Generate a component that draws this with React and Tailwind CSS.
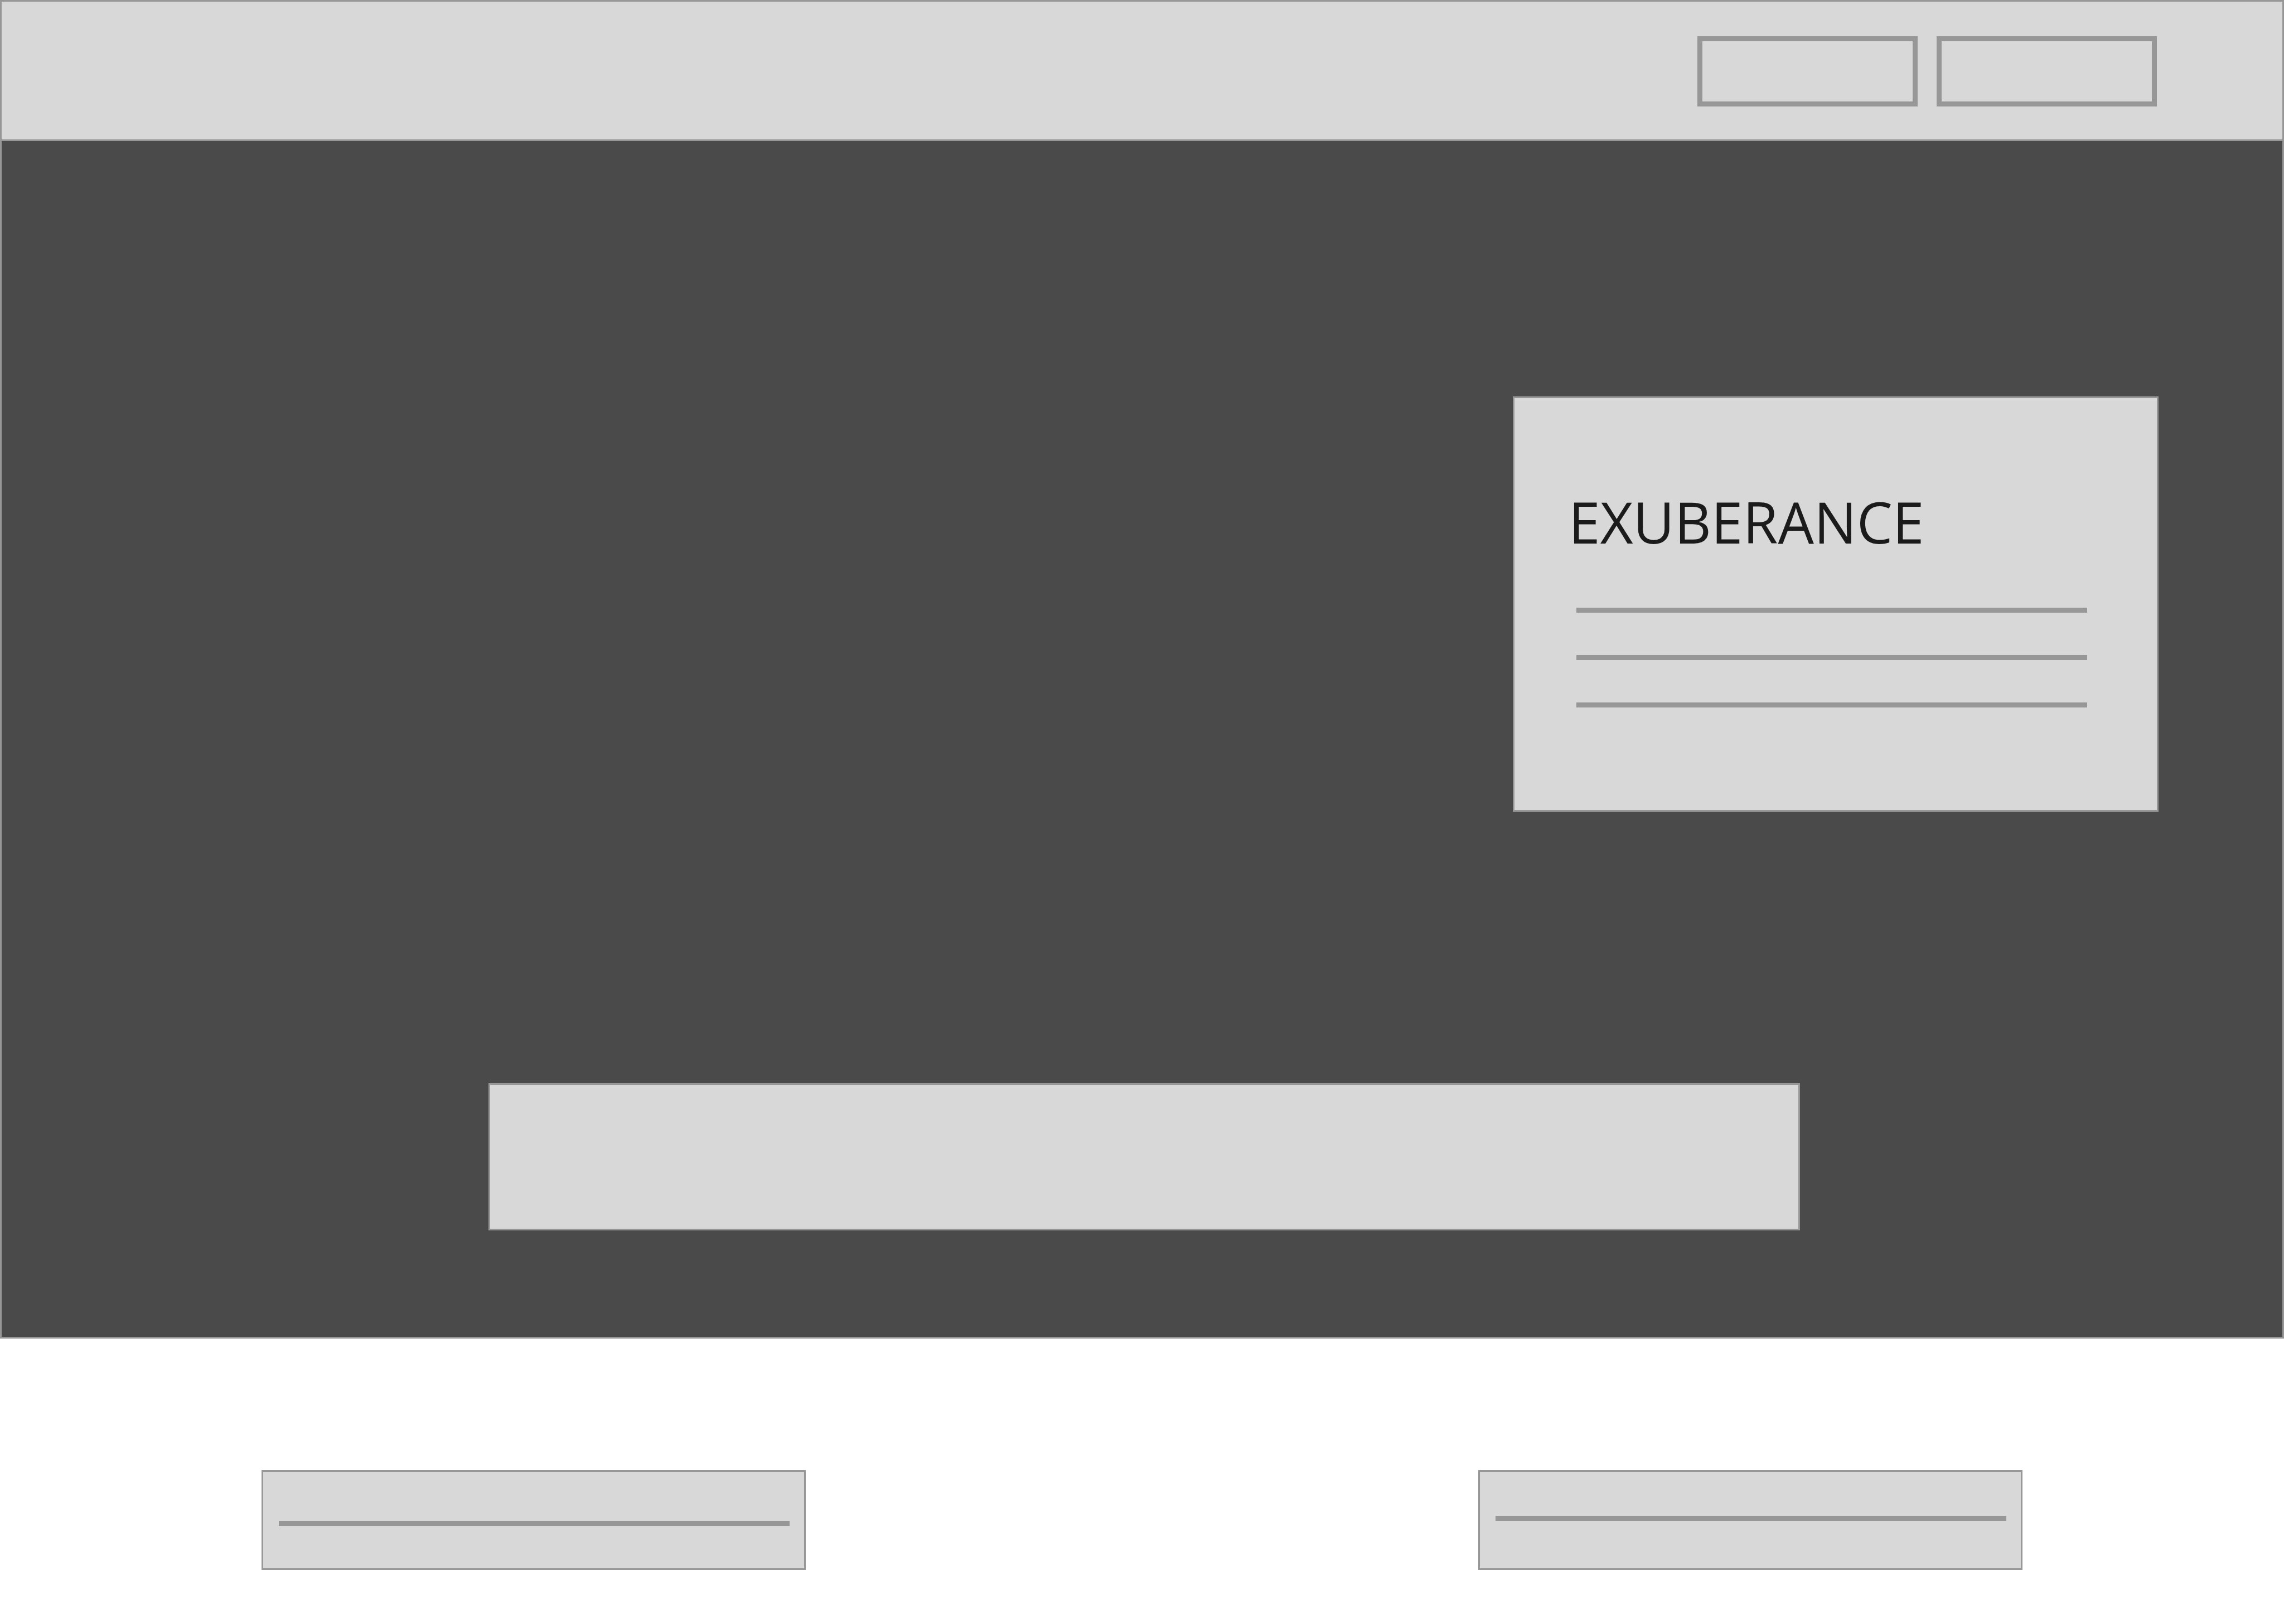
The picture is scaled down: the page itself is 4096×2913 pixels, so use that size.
const lines = ["first", "second", "third"];

function TextLine() {
  return <div className="h-[9px] bg-[#979797]" />;
}

function Header() {
  return (
    <header className="flex justify-end border-3 border-[#979797] bg-[#d8d8d8] pt-[62px] pr-[225px] pb-[59px]">
      <nav aria-label="Account" className="flex gap-[34px]">
        <button type="button" aria-label="Log in" className="h-[126px] w-[395px] border-9 border-[#979797]" />
        <button type="button" aria-label="Sign up" className="h-[126px] w-[395px] border-9 border-[#979797]" />
      </nav>
    </header>
  );
}

function IntroCard() {
  return (
    <article className="w-[1158px] border-3 border-[#979797] bg-[#d8d8d8] pt-[171px] pr-[125px] pb-[184px] pl-[97px]">
      <h1 className="font-['Open_Sans',sans-serif] text-[102px] leading-[102px] text-[#1b1b1b]">
        EXUBERANCE
      </h1>
      <div className="mt-[103px] ml-[14px] flex flex-col gap-[76px]">
        {lines.map((line) => (
          <TextLine key={line} />
        ))}
      </div>
    </article>
  );
}

function Hero() {
  return (
    <section className="border-x-3 border-b-3 border-[#979797] bg-[#4a4a4a] pt-[458px] pb-[191px]">
      <div className="flex justify-end pr-[222px]">
        <IntroCard />
      </div>
      <div className="mt-[487px] mr-[865px] ml-[873px] h-[264px] border-3 border-[#979797] bg-[#d8d8d8]" />
    </section>
  );
}

function Features() {
  return (
    <section className="flex justify-between px-[469px] pt-[236px] pb-[97px]">
      <div className="h-[179px] w-[976px] border-3 border-[#979797] bg-[#d8d8d8] pt-[88px] pr-[26px] pl-[28px]">
        <TextLine />
      </div>
      <div className="h-[179px] w-[976px] border-3 border-[#979797] bg-[#d8d8d8] pt-[79px] pr-[26px] pl-[28px]">
        <TextLine />
      </div>
    </section>
  );
}

export default function App() {
  return (
    <main className="bg-white">
      <Header />
      <Hero />
      <Features />
    </main>
  );
}
